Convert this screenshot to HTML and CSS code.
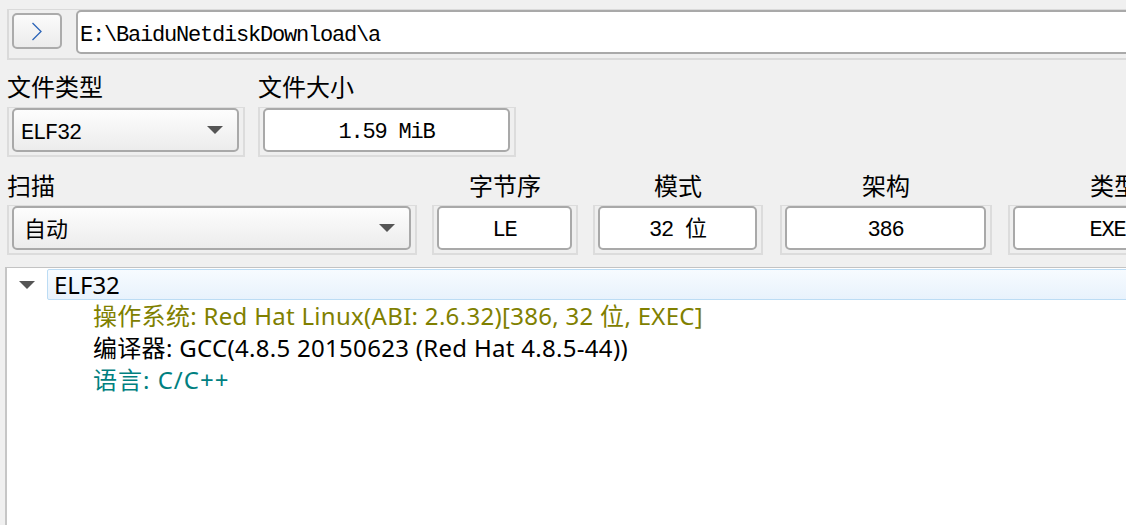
FILE: index.html
```html
<!DOCTYPE html>
<html lang="zh-CN">
<head>
<meta charset="utf-8">
<title>ELF 信息</title>
<link rel="stylesheet" href="styles.css">
</head>
<body>
<div class="app">
  <div class="pathbar">
    <div class="go">
      <svg width="12" height="19" viewBox="0 0 12 19"><polyline points="1.5,1 10,9.5 1.5,18" fill="none" stroke="#2b64b8" stroke-width="1.3"/></svg>
    </div>
    <div class="path">E:\BaiduNetdiskDownload\a</div>
  </div>

  <div class="row row1">
    <div class="field f-ftype">
      <div class="label">文件类型</div>
      <div class="frame"><div class="combo"><span class="val">ELF32</span><span class="caret"></span></div></div>
    </div>
    <div class="field f-fsize">
      <div class="label">文件大小</div>
      <div class="frame"><div class="box">1.59 MiB</div></div>
    </div>
  </div>

  <div class="row row2">
    <div class="field f-scan">
      <div class="label">扫描</div>
      <div class="frame"><div class="combo"><span class="val cjk">自动</span><span class="caret"></span></div></div>
    </div>
    <div class="field f-endian centered">
      <div class="label">字节序</div>
      <div class="frame"><div class="box">LE</div></div>
    </div>
    <div class="field f-mode centered">
      <div class="label">模式</div>
      <div class="frame"><div class="box">32 位</div></div>
    </div>
    <div class="field f-arch centered">
      <div class="label">架构</div>
      <div class="frame"><div class="box">386</div></div>
    </div>
    <div class="field f-type centered">
      <div class="label">类型</div>
      <div class="frame"><div class="box">EXEC</div></div>
    </div>
  </div>

  <div class="tree">
    <div class="node">
      <span class="twisty"></span>
      <div class="sel">ELF32</div>
    </div>
    <div class="child os">操作系统: Red Hat Linux(ABI: 2.6.32)[386, 32 位, EXEC]</div>
    <div class="child comp">编译器: GCC(4.8.5 20150623 (Red Hat 4.8.5-44))</div>
    <div class="child lang">语言: C/C++</div>
  </div>
</div>
</body>
</html>
```

FILE: styles.css
```css
html, body {
  margin: 0;
  padding: 0;
}
body {
  background: #f0f0f0;
  width: 1126px;
  height: 525px;
  overflow: hidden;
  font-family: "Noto Sans CJK SC", sans-serif;
  color: #000;
}
.app {
  width: 1400px;
  padding: 9px 0 0 7px;
}

/* path bar */
.pathbar {
  display: flex;
  align-items: flex-start;
  height: 51px;
  box-sizing: border-box;
  border: 2px solid #dadada;
  border-top-width: 1px;
  padding: 0 3px 4px 3px;
  background: #efefef;
}
.go {
  margin-top: 3px;
  width: 50px;
  height: 36px;
  box-sizing: border-box;
  border: 2px solid #ababab;
  border-radius: 5px;
  background: linear-gradient(#fbfbfb, #ebebeb);
  display: flex;
  align-items: center;
  justify-content: center;
}
.path {
  margin-left: 14px;
  flex: 1;
  height: 44px;
  box-sizing: border-box;
  border: 2px solid #a9a9a9;
  border-radius: 5px;
  background: #fff;
  font-family: "Liberation Mono", "Noto Sans CJK SC", monospace;
  font-size: 22px;
  letter-spacing: -1.2px;
  line-height: 47px;
  overflow: hidden;
  padding-left: 2px;
}

/* rows */
.row {
  display: flex;
}
.row1 {
  margin-top: 14px;
}
.row2 {
  margin-top: 16px;
}
.label {
  font-size: 24px;
  line-height: 24px;
  height: 24px;
  margin-bottom: 9px;
  white-space: nowrap;
}
.row2 .label {
  margin-bottom: 8px;
}
.centered .label {
  text-align: center;
}
.frame {
  border: 2px solid #dcdcdc;
  border-top-width: 1px;
  padding: 0 4px 3px 3px;
  background: #efefef;
}
.combo {
  height: 44px;
  box-sizing: border-box;
  border: 2px solid #a9a9a9;
  border-radius: 5px;
  background: linear-gradient(#fdfdfd, #ececec);
  display: flex;
  align-items: center;
  justify-content: space-between;
  padding: 0 14px 0 7px;
  font-family: "Liberation Mono", "Noto Sans CJK SC", monospace;
  font-size: 22px;
  letter-spacing: -1.2px;
}
.combo .val {
  padding-top: 6px;
}
.combo .cjk {
  font-family: "Noto Sans CJK SC", sans-serif;
  font-size: 22px;
  letter-spacing: 0;
  padding-left: 3px;
  padding-top: 0;
  padding-bottom: 2px;
}
.caret {
  width: 0;
  height: 0;
  border-left: 8px solid transparent;
  border-right: 8px solid transparent;
  border-top: 8px solid #555;
}
.box {
  height: 44px;
  box-sizing: border-box;
  border: 2px solid #a9a9a9;
  border-radius: 5px;
  background: #fff;
  text-align: center;
  line-height: 46px;
  overflow: hidden;
  font-family: "Liberation Mono", "Noto Sans CJK SC", monospace;
  font-size: 22px;
  letter-spacing: -1.2px;
  white-space: nowrap;
}

.f-ftype { width: 238px; margin-right: 13px; }
.f-fsize { width: 258px; }
.f-scan { width: 410px; margin-right: 15px; }
.f-endian { width: 146px; margin-right: 15px; }
.f-mode { width: 170px; margin-right: 17px; }
.f-arch { width: 212px; margin-right: 16px; }
.f-type { width: 212px; }

/* tree */
.tree {
  margin: 12px 0 0 -2px;
  height: 260px;
  border-left: 2px solid #c6c6c6;
  border-top: 1px solid #c3c3c3;
  background: #fff;
  padding-top: 1px;
  font-family: "Noto Sans", "Noto Sans CJK SC", sans-serif;
  font-size: 24px;
}
.node {
  display: flex;
  align-items: center;
  height: 31px;
}
.twisty {
  margin-left: 12px;
  margin-right: 12px;
  width: 0;
  height: 0;
  border-left: 8px solid transparent;
  border-right: 8px solid transparent;
  border-top: 8px solid #555;
}
.sel {
  flex: 1;
  height: 31px;
  box-sizing: border-box;
  border: 1px solid #bcdcf4;
  border-radius: 2px;
  background: linear-gradient(#f7fbff, #e8f2fc);
  padding-left: 6px;
  line-height: 29px;
}
.child {
  margin-left: 86px;
  height: 32px;
  line-height: 32px;
  white-space: nowrap;
  letter-spacing: 0.3px;
}
.os { color: #808000; }
.comp { color: #000; }
.lang { color: #008080; letter-spacing: 1px; }
```
